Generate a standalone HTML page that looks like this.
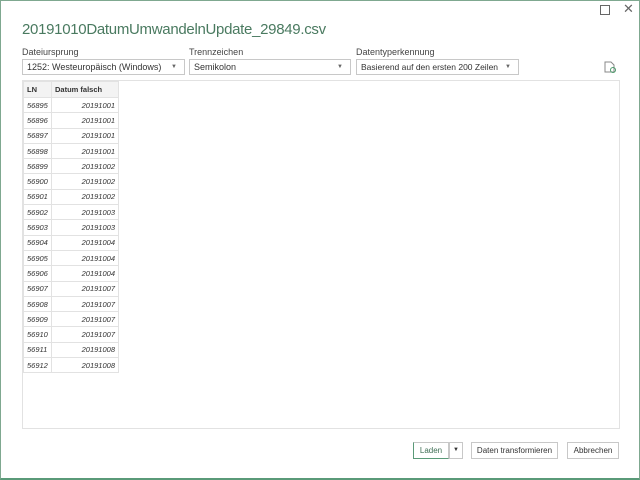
<!DOCTYPE html>
<html><head><style>
body{margin:0;width:640px;height:480px;background:#fff;font-family:"Liberation Sans",sans-serif;position:relative;overflow:hidden}
.frame{position:absolute;left:0;top:0;width:638px;height:477px;border:1px solid #7fa890;border-bottom:2px solid #5a9a78}
.title{position:absolute;left:22px;top:21px;font-size:15px;color:#4a7a60;letter-spacing:-0.3px;white-space:nowrap}
.lbl{position:absolute;top:47px;font-size:9px;color:#444}
.sel{position:absolute;top:59px;height:14px;border:1px solid #c8c8c8;font-size:9px;color:#333;line-height:14px;padding-left:4px;box-sizing:content-box;white-space:nowrap;overflow:hidden}
.sel span{position:absolute;right:7px;top:0;font-size:6px;color:#666}
.box{position:absolute;left:22px;top:80px;width:596px;height:347px;border:1px solid #e2e2e2}
table{border-collapse:collapse;font-size:7.5px;font-style:italic;color:#333}
td{border:1px solid #e2e2e2;height:15.3px;padding:0 3px;box-sizing:border-box}
th{background:#f3f3f3;font-style:normal;font-weight:bold;text-align:left;height:16px;padding:0 3px;border:1px solid #e2e2e2;color:#333;box-sizing:border-box}
.btn{position:absolute;top:442px;height:15px;border:1px solid #c8c8c8;font-size:8px;color:#333;text-align:center;line-height:15px}
</style></head><body>
<div class="frame"></div>
<div style="position:absolute;left:600px;top:5px;width:8px;height:8px;border:1px solid #666"></div>
<div style="position:absolute;left:623px;top:1px;font-size:13px;color:#666">✕</div>
<div class="title">20191010DatumUmwandelnUpdate_29849.csv</div>
<div class="lbl" style="left:22px">Dateiursprung</div>
<div class="lbl" style="left:189px">Trennzeichen</div>
<div class="lbl" style="left:356px">Datentyperkennung</div>
<div class="sel" style="left:22px;width:157px">1252: Westeuropäisch (Windows)<span>▼</span></div>
<div class="sel" style="left:189px;width:156px">Semikolon<span>▼</span></div>
<div class="sel" style="left:356px;width:157px;font-size:8.5px">Basierend auf den ersten 200 Zeilen<span>▼</span></div>
<svg style="position:absolute;left:604px;top:61px" width="12" height="12"><path d="M1 1h6l3 3v7H1z" fill="none" stroke="#888"/><circle cx="9" cy="9" r="2.5" fill="none" stroke="#4a9a6a"/></svg>
<div class="box">
<table style="table-layout:fixed;width:95px">
<col style="width:28px"><col style="width:67px">
<tr><th>LN</th><th>Datum falsch</th></tr>
<tr><td>56895</td><td style="text-align:right">20191001</td></tr>
<tr><td>56896</td><td style="text-align:right">20191001</td></tr>
<tr><td>56897</td><td style="text-align:right">20191001</td></tr>
<tr><td>56898</td><td style="text-align:right">20191001</td></tr>
<tr><td>56899</td><td style="text-align:right">20191002</td></tr>
<tr><td>56900</td><td style="text-align:right">20191002</td></tr>
<tr><td>56901</td><td style="text-align:right">20191002</td></tr>
<tr><td>56902</td><td style="text-align:right">20191003</td></tr>
<tr><td>56903</td><td style="text-align:right">20191003</td></tr>
<tr><td>56904</td><td style="text-align:right">20191004</td></tr>
<tr><td>56905</td><td style="text-align:right">20191004</td></tr>
<tr><td>56906</td><td style="text-align:right">20191004</td></tr>
<tr><td>56907</td><td style="text-align:right">20191007</td></tr>
<tr><td>56908</td><td style="text-align:right">20191007</td></tr>
<tr><td>56909</td><td style="text-align:right">20191007</td></tr>
<tr><td>56910</td><td style="text-align:right">20191007</td></tr>
<tr><td>56911</td><td style="text-align:right">20191008</td></tr>
<tr><td>56912</td><td style="text-align:right">20191008</td></tr>
</table>
</div>
<div class="btn" style="left:413px;width:34px;border-left:1px solid #5a9a78;border-bottom:1px solid #5a9a78;color:#3f6f55">Laden</div>
<div class="btn" style="left:449px;width:12px;font-size:6px">▼</div>
<div class="btn" style="left:471px;width:85px">Daten transformieren</div>
<div class="btn" style="left:567px;width:50px">Abbrechen</div>
</body></html>
